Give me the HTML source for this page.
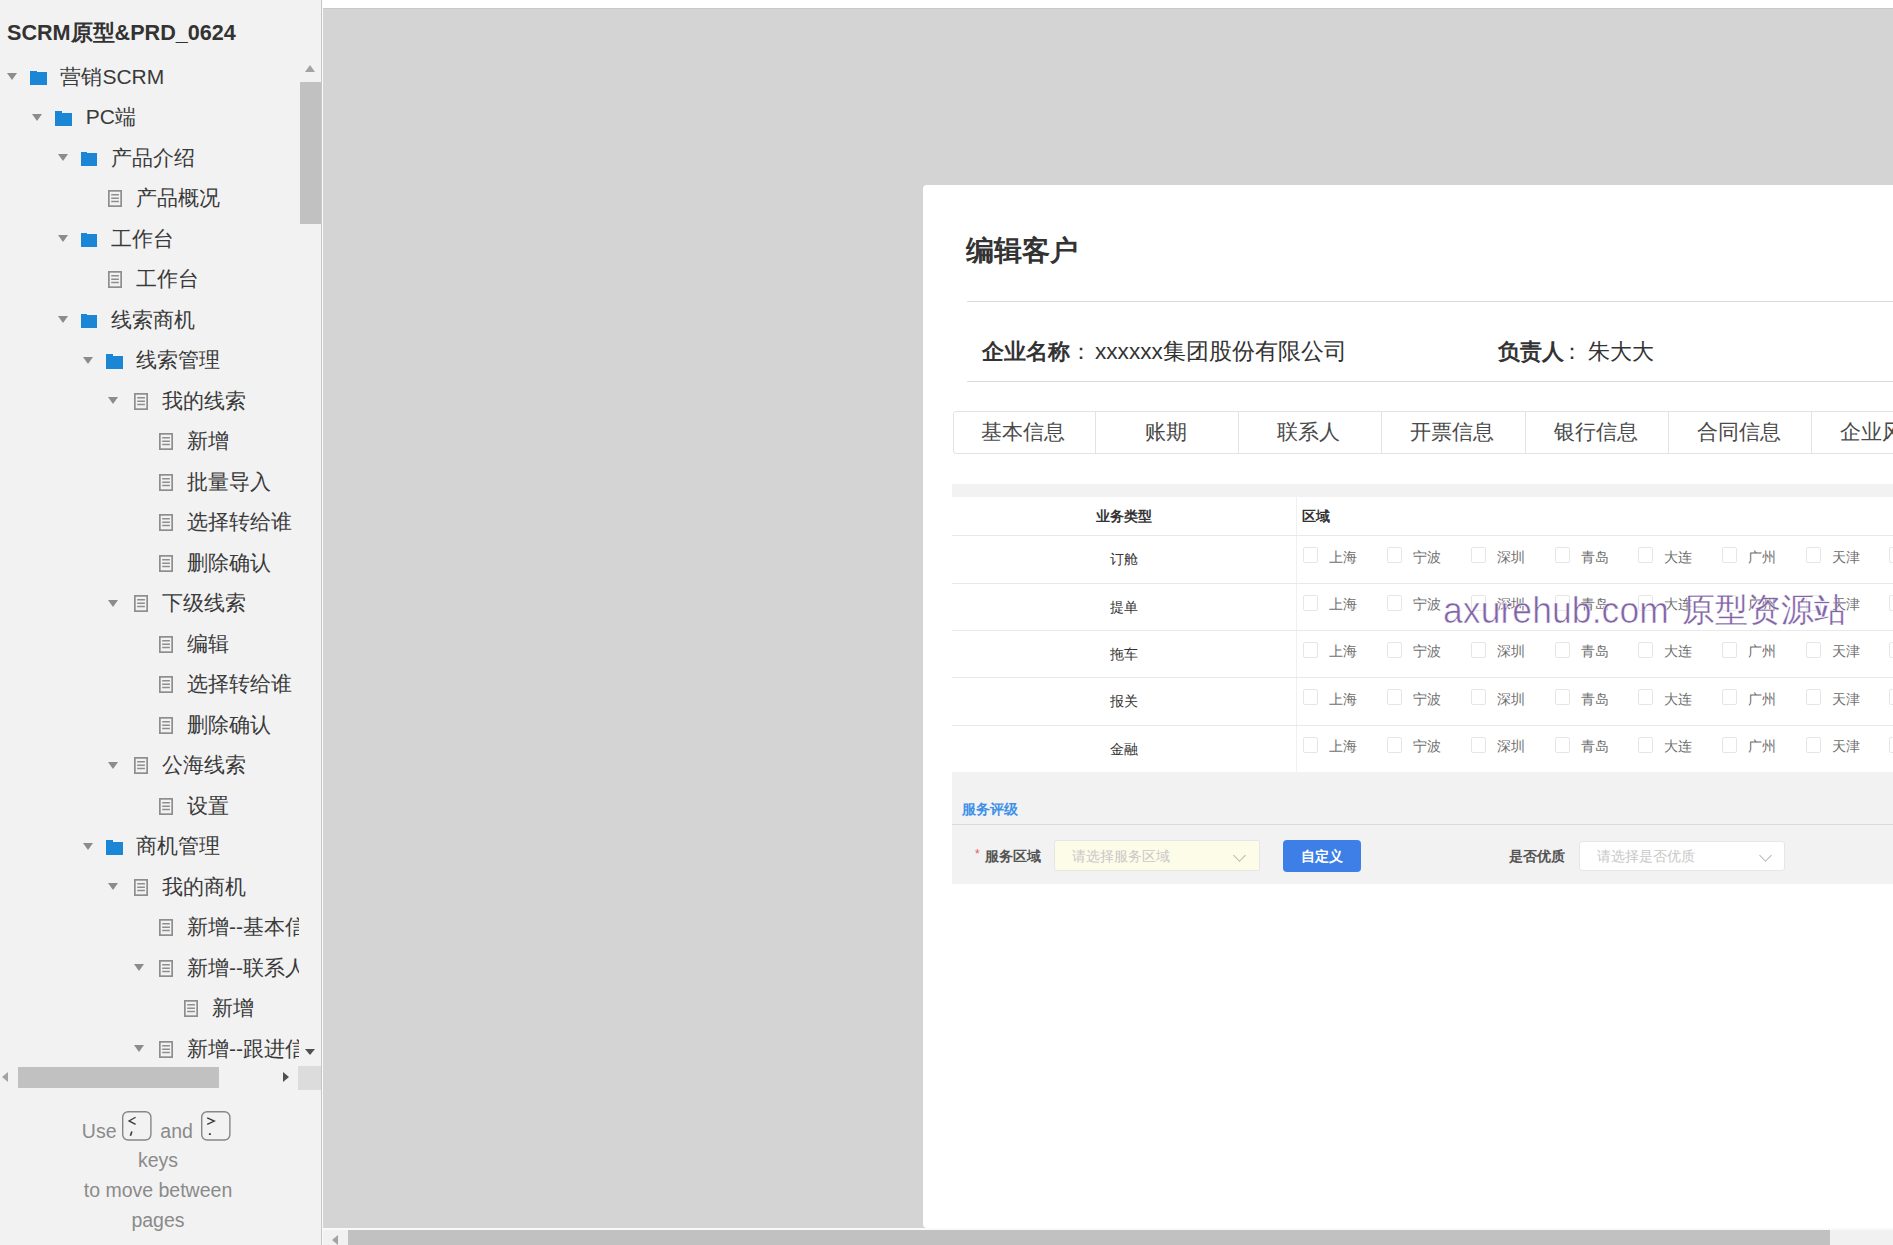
<!DOCTYPE html>
<html><head><meta charset="utf-8"><style>
*{margin:0;padding:0;box-sizing:border-box}
html,body{width:1893px;height:1245px;overflow:hidden;background:#d4d4d4;font-family:"Liberation Sans",sans-serif}
.abs{position:absolute}
#side{position:absolute;left:0;top:0;width:321px;height:1245px;background:#f2f2f2;overflow:hidden}
#sideb{position:absolute;left:321px;top:0;width:1px;height:1245px;background:#c6c6c6}
#sidew{position:absolute;left:322px;top:0;width:1px;height:1245px;background:#fafafa}
.title{position:absolute;left:7px;top:18px;font-size:21.6px;font-weight:bold;color:#333;line-height:30px;white-space:nowrap}
#clip{position:absolute;left:0;top:50px;width:299px;height:1016px;overflow:hidden}
#clip > div,#clip > svg{position:absolute}
.tri{width:0;height:0;border-left:5px solid transparent;border-right:5px solid transparent;border-top:7px solid #8c8c8c;margin-top:-50px}
.fold{width:16.7px;height:13px;background:#1c86d6;margin-top:-50px}
.fold:before{content:"";position:absolute;left:0;top:-1.1px;width:6.8px;height:1.6px;background:#1c86d6}
.pg{margin-top:-50px}
.tx{font-size:21px;line-height:40.5px;color:#3a3a3a;white-space:nowrap;margin-top:-50px}
.sb{position:absolute;background:#c1c1c1}
.foot{position:absolute;left:0;width:316px;text-align:center;font-size:19.5px;color:#8a8a8a;line-height:30px;white-space:nowrap}
.ft{position:absolute;font-size:19.5px;color:#8a8a8a;line-height:30px;white-space:nowrap}
.key{display:inline-block;width:29px;height:29px;border:1.5px solid #8f8f8f;border-radius:6px;vertical-align:-8px;position:relative;font-size:14px;line-height:14px;text-align:left}
#main{position:absolute;left:323px;top:0;width:1570px;height:1245px;overflow:hidden;background:#d4d4d4}
#topbar{position:absolute;left:323px;top:0;width:1570px;height:9px;background:#fff;border-bottom:1px solid #c9c9c9}
#card{position:absolute;left:923px;top:185px;width:1000px;height:1043px;background:#fff;border-radius:4px}
.t28{position:absolute;left:966px;top:231px;font-size:28px;font-weight:bold;color:#333;line-height:40px}
.dv{position:absolute;left:967px;width:926px;height:1px;background:#dcdcdc}
.info{position:absolute;top:336px;font-size:22px;line-height:32px;color:#333;white-space:nowrap}
.info b{font-weight:bold}
.tab{position:absolute;top:411px;height:43px;border:1px solid #e3e3e3;background:#fff;text-align:center;font-size:21px;line-height:40px;color:#4a4a4a;padding-right:3px}
.tab:first-child{border-radius:3px 0 0 3px}
.hl{position:absolute;left:952px;width:941px;height:1px;background:#e9e9e9}
.rl{position:absolute;left:952px;width:343px;text-align:center;font-size:14px;line-height:40px;color:#333}
.cb{position:absolute;width:15px;height:16px;border:1px solid #e6e6e6;border-radius:2px;background:#fff}
.cl{position:absolute;font-size:13.5px;line-height:24px;color:#6e6e6e;white-space:nowrap}
.hd{position:absolute;top:496px;font-size:14px;font-weight:bold;color:#333;line-height:40px}
.wm{position:absolute;top:583px;line-height:50px;color:#8264a8;white-space:nowrap}
.lab{position:absolute;top:844px;font-size:14px;font-weight:bold;color:#555;line-height:24px;white-space:nowrap}
.ph{position:absolute;font-size:14px;color:#c8c8c8;line-height:30px;white-space:nowrap}
.chev{position:absolute;width:9px;height:9px;border-right:1.2px solid #b5b5b5;border-bottom:1.2px solid #b5b5b5;transform:rotate(45deg)}
</style></head><body>
<div id="main"></div>
<div id="topbar"></div>
<div id="card"></div>
<div class="t28">编辑客户</div>
<div class="dv" style="top:301px"></div>
<div class="info" style="left:982px"><b>企业名称</b></div><div class="info" style="left:1070px">：</div><div class="info" style="left:1095px;font-size:22.6px">xxxxxx集团股份有限公司</div>
<div class="info" style="left:1498px"><b>负责人</b></div><div class="info" style="left:1561px">：</div><div class="info" style="left:1588px">朱大大</div>
<div class="dv" style="top:381px"></div>
<div id="tabs"><div class="tab" style="left:953px;width:143px">基本信息</div><div class="tab" style="left:1095px;width:144px">账期</div><div class="tab" style="left:1238px;width:144px">联系人</div><div class="tab" style="left:1381px;width:145px">开票信息</div><div class="tab" style="left:1525px;width:144px">银行信息</div><div class="tab" style="left:1668px;width:144px">合同信息</div><div class="tab" style="left:1811px;width:144px">企业风险</div></div>
<div class="abs" style="left:952px;top:484px;width:941px;height:13px;background:#f2f2f2"></div>
<div class="hd" style="left:1096px">业务类型</div>
<div class="hd" style="left:1302px">区域</div>
<div class="abs" style="left:1295.5px;top:497px;width:1px;height:275px;background:#f0f0f0"></div>
<div class="rl" style="top:539.2px">订舱</div><div class="cb" style="left:1303.3px;top:547.2px"></div><div class="cl" style="left:1329.3px;top:545.8px">上海</div><div class="cb" style="left:1387.0px;top:547.2px"></div><div class="cl" style="left:1413.0px;top:545.8px">宁波</div><div class="cb" style="left:1470.7px;top:547.2px"></div><div class="cl" style="left:1496.7px;top:545.8px">深圳</div><div class="cb" style="left:1554.5px;top:547.2px"></div><div class="cl" style="left:1580.5px;top:545.8px">青岛</div><div class="cb" style="left:1638.2px;top:547.2px"></div><div class="cl" style="left:1664.2px;top:545.8px">大连</div><div class="cb" style="left:1721.9px;top:547.2px"></div><div class="cl" style="left:1747.9px;top:545.8px">广州</div><div class="cb" style="left:1805.6px;top:547.2px"></div><div class="cl" style="left:1831.6px;top:545.8px">天津</div><div class="cb" style="left:1889.3px;top:547.2px"></div><div class="rl" style="top:586.9px">提单</div><div class="cb" style="left:1303.3px;top:594.9px"></div><div class="cl" style="left:1329.3px;top:593.4px">上海</div><div class="cb" style="left:1387.0px;top:594.9px"></div><div class="cl" style="left:1413.0px;top:593.4px">宁波</div><div class="cb" style="left:1470.7px;top:594.9px"></div><div class="cl" style="left:1496.7px;top:593.4px">深圳</div><div class="cb" style="left:1554.5px;top:594.9px"></div><div class="cl" style="left:1580.5px;top:593.4px">青岛</div><div class="cb" style="left:1638.2px;top:594.9px"></div><div class="cl" style="left:1664.2px;top:593.4px">大连</div><div class="cb" style="left:1721.9px;top:594.9px"></div><div class="cl" style="left:1747.9px;top:593.4px">广州</div><div class="cb" style="left:1805.6px;top:594.9px"></div><div class="cl" style="left:1831.6px;top:593.4px">天津</div><div class="cb" style="left:1889.3px;top:594.9px"></div><div class="rl" style="top:633.9px">拖车</div><div class="cb" style="left:1303.3px;top:641.9px"></div><div class="cl" style="left:1329.3px;top:640.4px">上海</div><div class="cb" style="left:1387.0px;top:641.9px"></div><div class="cl" style="left:1413.0px;top:640.4px">宁波</div><div class="cb" style="left:1470.7px;top:641.9px"></div><div class="cl" style="left:1496.7px;top:640.4px">深圳</div><div class="cb" style="left:1554.5px;top:641.9px"></div><div class="cl" style="left:1580.5px;top:640.4px">青岛</div><div class="cb" style="left:1638.2px;top:641.9px"></div><div class="cl" style="left:1664.2px;top:640.4px">大连</div><div class="cb" style="left:1721.9px;top:641.9px"></div><div class="cl" style="left:1747.9px;top:640.4px">广州</div><div class="cb" style="left:1805.6px;top:641.9px"></div><div class="cl" style="left:1831.6px;top:640.4px">天津</div><div class="cb" style="left:1889.3px;top:641.9px"></div><div class="rl" style="top:681.1px">报关</div><div class="cb" style="left:1303.3px;top:689.1px"></div><div class="cl" style="left:1329.3px;top:687.6px">上海</div><div class="cb" style="left:1387.0px;top:689.1px"></div><div class="cl" style="left:1413.0px;top:687.6px">宁波</div><div class="cb" style="left:1470.7px;top:689.1px"></div><div class="cl" style="left:1496.7px;top:687.6px">深圳</div><div class="cb" style="left:1554.5px;top:689.1px"></div><div class="cl" style="left:1580.5px;top:687.6px">青岛</div><div class="cb" style="left:1638.2px;top:689.1px"></div><div class="cl" style="left:1664.2px;top:687.6px">大连</div><div class="cb" style="left:1721.9px;top:689.1px"></div><div class="cl" style="left:1747.9px;top:687.6px">广州</div><div class="cb" style="left:1805.6px;top:689.1px"></div><div class="cl" style="left:1831.6px;top:687.6px">天津</div><div class="cb" style="left:1889.3px;top:689.1px"></div><div class="rl" style="top:728.5px">金融</div><div class="cb" style="left:1303.3px;top:736.5px"></div><div class="cl" style="left:1329.3px;top:735.0px">上海</div><div class="cb" style="left:1387.0px;top:736.5px"></div><div class="cl" style="left:1413.0px;top:735.0px">宁波</div><div class="cb" style="left:1470.7px;top:736.5px"></div><div class="cl" style="left:1496.7px;top:735.0px">深圳</div><div class="cb" style="left:1554.5px;top:736.5px"></div><div class="cl" style="left:1580.5px;top:735.0px">青岛</div><div class="cb" style="left:1638.2px;top:736.5px"></div><div class="cl" style="left:1664.2px;top:735.0px">大连</div><div class="cb" style="left:1721.9px;top:736.5px"></div><div class="cl" style="left:1747.9px;top:735.0px">广州</div><div class="cb" style="left:1805.6px;top:736.5px"></div><div class="cl" style="left:1831.6px;top:735.0px">天津</div><div class="cb" style="left:1889.3px;top:736.5px"></div><div class="hl" style="top:534.8px"></div><div class="hl" style="top:582.7px"></div><div class="hl" style="top:630.0px"></div><div class="hl" style="top:676.8px"></div><div class="hl" style="top:724.5px"></div><div class="hl" style="top:771.5px"></div>
<div class="wm" style="left:1443px;top:585.5px;font-size:36px;letter-spacing:0.1px;transform:scaleX(0.985);transform-origin:0 0;-webkit-text-stroke:0.7px rgba(255,255,255,0.9)">axurehub.com</div><div class="wm" style="left:1682px;font-size:33px;top:584.5px;-webkit-text-stroke:0.4px rgba(255,255,255,0.8)">原型资源站</div>
<div class="abs" style="left:952px;top:772px;width:941px;height:112px;background:#f2f2f2"></div>
<div class="abs" style="left:962px;top:797px;font-size:14px;font-weight:bold;color:#3f91e8;line-height:24px">服务评级</div>
<div class="abs" style="left:952px;top:824px;width:941px;height:1px;background:#dadada"></div>
<div class="abs" style="left:975px;top:846px;font-size:12px;color:#e85a5a;line-height:16px">*</div>
<div class="lab" style="left:985px">服务区域</div>
<div class="abs" style="left:1054px;top:840px;width:206px;height:31px;background:#fcfce8;border:1px solid #e6e6e6;border-radius:2px"></div>
<div class="ph" style="left:1072px;top:841px">请选择服务区域</div>
<div class="chev" style="left:1235px;top:851px"></div>
<div class="abs" style="left:1283px;top:840px;width:78px;height:32px;background:#3d7fe7;border-radius:4px;color:#fff;font-size:14px;font-weight:bold;line-height:32px;text-align:center">自定义</div>
<div class="lab" style="left:1509px">是否优质</div>
<div class="abs" style="left:1579px;top:840.5px;width:206px;height:30px;background:#fff;border:1px solid #e6e6e6;border-radius:3px"></div>
<div class="ph" style="left:1597px;top:841px">请选择是否优质</div>
<div class="chev" style="left:1761px;top:851px"></div>
<!-- bottom scrollbar -->
<div class="abs" style="left:323px;top:1228px;width:1570px;height:17px;background:#f1f1f1;border-top:2px solid #fafafa"></div>
<div class="sb" style="left:348px;top:1230px;width:1482px;height:15px"></div>
<div class="abs" style="left:332px;top:1235px;width:0;height:0;border-top:5px solid transparent;border-bottom:5px solid transparent;border-right:6px solid #a3a3a3"></div>

<svg width="0" height="0" style="position:absolute"><defs><g id="pgi"><rect x="0.85" y="0.85" width="12.3" height="15.3" fill="none" stroke="#8e8e8e" stroke-width="1.7"/><path d="M3.2 4.8H10.9M3.2 8.2H10.9M3.2 11.6H10.9" stroke="#8e8e8e" stroke-width="1.5"/></g></defs></svg>
<div id="side">
<div class="title">SCRM原型&amp;PRD_0624</div>
<div id="clip">
<div class="tri" style="left:7.0px;top:73.0px"></div>
<div class="fold" style="left:30.1px;top:72.0px"></div>
<div class="tx" style="left:60.4px;top:56.75px">营销SCRM</div>
<div class="tri" style="left:32.3px;top:113.5px"></div>
<div class="fold" style="left:55.4px;top:112.5px"></div>
<div class="tx" style="left:85.7px;top:97.25px">PC端</div>
<div class="tri" style="left:57.6px;top:154.0px"></div>
<div class="fold" style="left:80.7px;top:153.0px"></div>
<div class="tx" style="left:111.0px;top:137.75px">产品介绍</div>
<svg class="pg" style="left:108.2px;top:190.0px" width="14" height="17"><use href="#pgi"/></svg>
<div class="tx" style="left:136.3px;top:178.25px">产品概况</div>
<div class="tri" style="left:57.6px;top:235.0px"></div>
<div class="fold" style="left:80.7px;top:234.0px"></div>
<div class="tx" style="left:111.0px;top:218.75px">工作台</div>
<svg class="pg" style="left:108.2px;top:271.0px" width="14" height="17"><use href="#pgi"/></svg>
<div class="tx" style="left:136.3px;top:259.25px">工作台</div>
<div class="tri" style="left:57.6px;top:316.0px"></div>
<div class="fold" style="left:80.7px;top:315.0px"></div>
<div class="tx" style="left:111.0px;top:299.75px">线索商机</div>
<div class="tri" style="left:82.9px;top:356.5px"></div>
<div class="fold" style="left:106.0px;top:355.5px"></div>
<div class="tx" style="left:136.3px;top:340.25px">线索管理</div>
<div class="tri" style="left:108.2px;top:397.0px"></div>
<svg class="pg" style="left:133.5px;top:392.5px" width="14" height="17"><use href="#pgi"/></svg>
<div class="tx" style="left:161.6px;top:380.75px">我的线索</div>
<svg class="pg" style="left:158.8px;top:433.0px" width="14" height="17"><use href="#pgi"/></svg>
<div class="tx" style="left:186.9px;top:421.25px">新增</div>
<svg class="pg" style="left:158.8px;top:473.5px" width="14" height="17"><use href="#pgi"/></svg>
<div class="tx" style="left:186.9px;top:461.75px">批量导入</div>
<svg class="pg" style="left:158.8px;top:514.0px" width="14" height="17"><use href="#pgi"/></svg>
<div class="tx" style="left:186.9px;top:502.25px">选择转给谁</div>
<svg class="pg" style="left:158.8px;top:554.5px" width="14" height="17"><use href="#pgi"/></svg>
<div class="tx" style="left:186.9px;top:542.75px">删除确认</div>
<div class="tri" style="left:108.2px;top:599.5px"></div>
<svg class="pg" style="left:133.5px;top:595.0px" width="14" height="17"><use href="#pgi"/></svg>
<div class="tx" style="left:161.6px;top:583.25px">下级线索</div>
<svg class="pg" style="left:158.8px;top:635.5px" width="14" height="17"><use href="#pgi"/></svg>
<div class="tx" style="left:186.9px;top:623.75px">编辑</div>
<svg class="pg" style="left:158.8px;top:676.0px" width="14" height="17"><use href="#pgi"/></svg>
<div class="tx" style="left:186.9px;top:664.25px">选择转给谁</div>
<svg class="pg" style="left:158.8px;top:716.5px" width="14" height="17"><use href="#pgi"/></svg>
<div class="tx" style="left:186.9px;top:704.75px">删除确认</div>
<div class="tri" style="left:108.2px;top:761.5px"></div>
<svg class="pg" style="left:133.5px;top:757.0px" width="14" height="17"><use href="#pgi"/></svg>
<div class="tx" style="left:161.6px;top:745.25px">公海线索</div>
<svg class="pg" style="left:158.8px;top:797.5px" width="14" height="17"><use href="#pgi"/></svg>
<div class="tx" style="left:186.9px;top:785.75px">设置</div>
<div class="tri" style="left:82.9px;top:842.5px"></div>
<div class="fold" style="left:106.0px;top:841.5px"></div>
<div class="tx" style="left:136.3px;top:826.25px">商机管理</div>
<div class="tri" style="left:108.2px;top:883.0px"></div>
<svg class="pg" style="left:133.5px;top:878.5px" width="14" height="17"><use href="#pgi"/></svg>
<div class="tx" style="left:161.6px;top:866.75px">我的商机</div>
<svg class="pg" style="left:158.8px;top:919.0px" width="14" height="17"><use href="#pgi"/></svg>
<div class="tx" style="left:186.9px;top:907.25px">新增--基本信息</div>
<div class="tri" style="left:133.5px;top:964.0px"></div>
<svg class="pg" style="left:158.8px;top:959.5px" width="14" height="17"><use href="#pgi"/></svg>
<div class="tx" style="left:186.9px;top:947.75px">新增--联系人</div>
<svg class="pg" style="left:184.1px;top:1000.0px" width="14" height="17"><use href="#pgi"/></svg>
<div class="tx" style="left:212.2px;top:988.25px">新增</div>
<div class="tri" style="left:133.5px;top:1045.0px"></div>
<svg class="pg" style="left:158.8px;top:1040.5px" width="14" height="17"><use href="#pgi"/></svg>
<div class="tx" style="left:186.9px;top:1028.75px">新增--跟进信息</div>
</div>
<div class="sb" style="left:300px;top:82px;width:21px;height:142px"></div>
<div class="abs" style="left:305px;top:65px;width:0;height:0;border-left:5.5px solid transparent;border-right:5.5px solid transparent;border-bottom:7px solid #a3a3a3"></div>
<div class="abs" style="left:305px;top:1049px;width:0;height:0;border-left:5.5px solid transparent;border-right:5.5px solid transparent;border-top:6px solid #505050"></div>
<div class="sb" style="left:18px;top:1067px;width:201px;height:21px"></div>
<div class="abs" style="left:2px;top:1072px;width:0;height:0;border-top:5.5px solid transparent;border-bottom:5.5px solid transparent;border-right:6px solid #a3a3a3"></div>
<div class="abs" style="left:283px;top:1072px;width:0;height:0;border-top:5.5px solid transparent;border-bottom:5.5px solid transparent;border-left:6px solid #505050"></div>
<div class="abs" style="left:298px;top:1066px;width:23px;height:24px;background:#dcdcdc"></div>
<div class="ft" style="left:81.8px;top:1115.5px">Use</div>
<svg class="abs" style="left:122.2px;top:1111px" width="30" height="30" viewBox="0 0 30 30"><rect x="0.7" y="0.7" width="28.2" height="28.3" rx="5.5" fill="none" stroke="#868686" stroke-width="1.4"/><polyline points="13.6,6.3 7,9.9 13.6,13.4" fill="none" stroke="#3a3a3a" stroke-width="1.3"/><line x1="9.9" y1="20.6" x2="8.4" y2="24.8" stroke="#3a3a3a" stroke-width="1.6"/></svg>
<div class="ft" style="left:160.3px;top:1115.5px">and</div>
<svg class="abs" style="left:201.3px;top:1111px" width="30" height="30" viewBox="0 0 30 30"><rect x="0.7" y="0.7" width="28.2" height="28.3" rx="5.5" fill="none" stroke="#868686" stroke-width="1.4"/><polyline points="6.2,6.8 13.4,10.1 6.2,13.4" fill="none" stroke="#3a3a3a" stroke-width="1.3"/><rect x="7.9" y="22.2" width="1.9" height="1.8" fill="#3a3a3a"/></svg>
<div class="foot" style="top:1144.8px">keys</div>
<div class="foot" style="top:1174.7px">to move between</div>
<div class="foot" style="top:1204.5px">pages</div>
</div>
<div id="sideb"></div><div id="sidew"></div>
</body></html>
